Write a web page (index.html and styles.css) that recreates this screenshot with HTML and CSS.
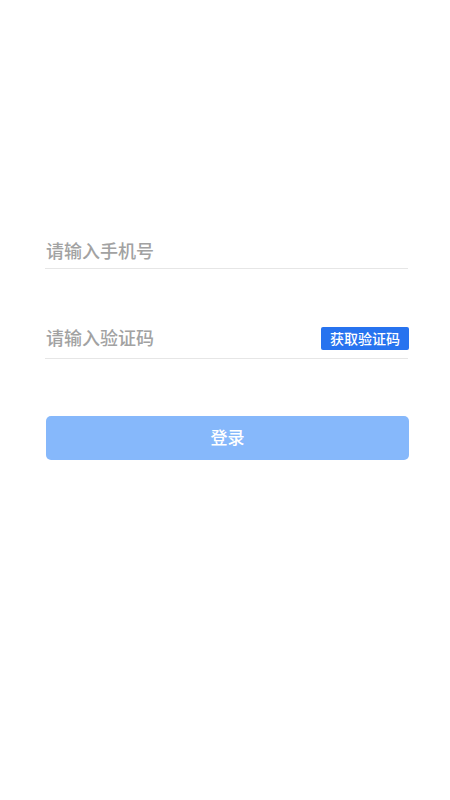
FILE: index.html
```html
<!DOCTYPE html>
<html lang="zh">
<head>
<meta charset="utf-8">
<link rel="stylesheet" href="styles.css">
</head>
<body>
<main class="login">
  <div class="field">
    <input class="input" type="text" placeholder="请输入手机号">
  </div>
  <div class="field field-code">
    <input class="input" type="text" placeholder="请输入验证码">
    <button class="code-btn" type="button">获取验证码</button>
  </div>
  <button class="submit" type="button">登录</button>
</main>
</body>
</html>
```
FILE: styles.css
```css
html, body {
  margin: 0;
  padding: 0;
  background: #ffffff;
  font-family: "Noto Sans CJK SC", "Noto Sans", sans-serif;
}
.login {
  display: flex;
  flex-direction: column;
  padding: 228px 42px 0 45px;
}
.field {
  display: flex;
  align-items: center;
  height: 40px;
  border-bottom: 1px solid #e6e6e6;
}
.field-code {
  margin-top: 49px;
}
.input {
  flex: 1;
  min-width: 0;
  border: none;
  outline: none;
  background: transparent;
  padding: 4px 0 0 1px;
  font-family: inherit;
  font-size: 18px;
  font-weight: 500;
  color: #333;
}
.field-code .input {
  padding: 0 0 2px 1px;
}
.input::placeholder {
  color: #a2a2a2;
}
.code-btn {
  flex: none;
  width: 88px;
  height: 23px;
  margin-right: -1px;
  padding: 0;
  border: none;
  border-radius: 2px;
  background: #2773ef;
  color: #ffffff;
  font-family: inherit;
  font-size: 14px;
  font-weight: 500;
  line-height: 23px;
}
.submit {
  margin-top: 57px;
  margin-left: 1px;
  margin-right: -1px;
  height: 44px;
  padding: 0 0 3px;
  border: none;
  border-radius: 5px;
  background: #86b8fb;
  color: #ffffff;
  font-family: inherit;
  font-size: 17px;
  font-weight: 500;
}
```
